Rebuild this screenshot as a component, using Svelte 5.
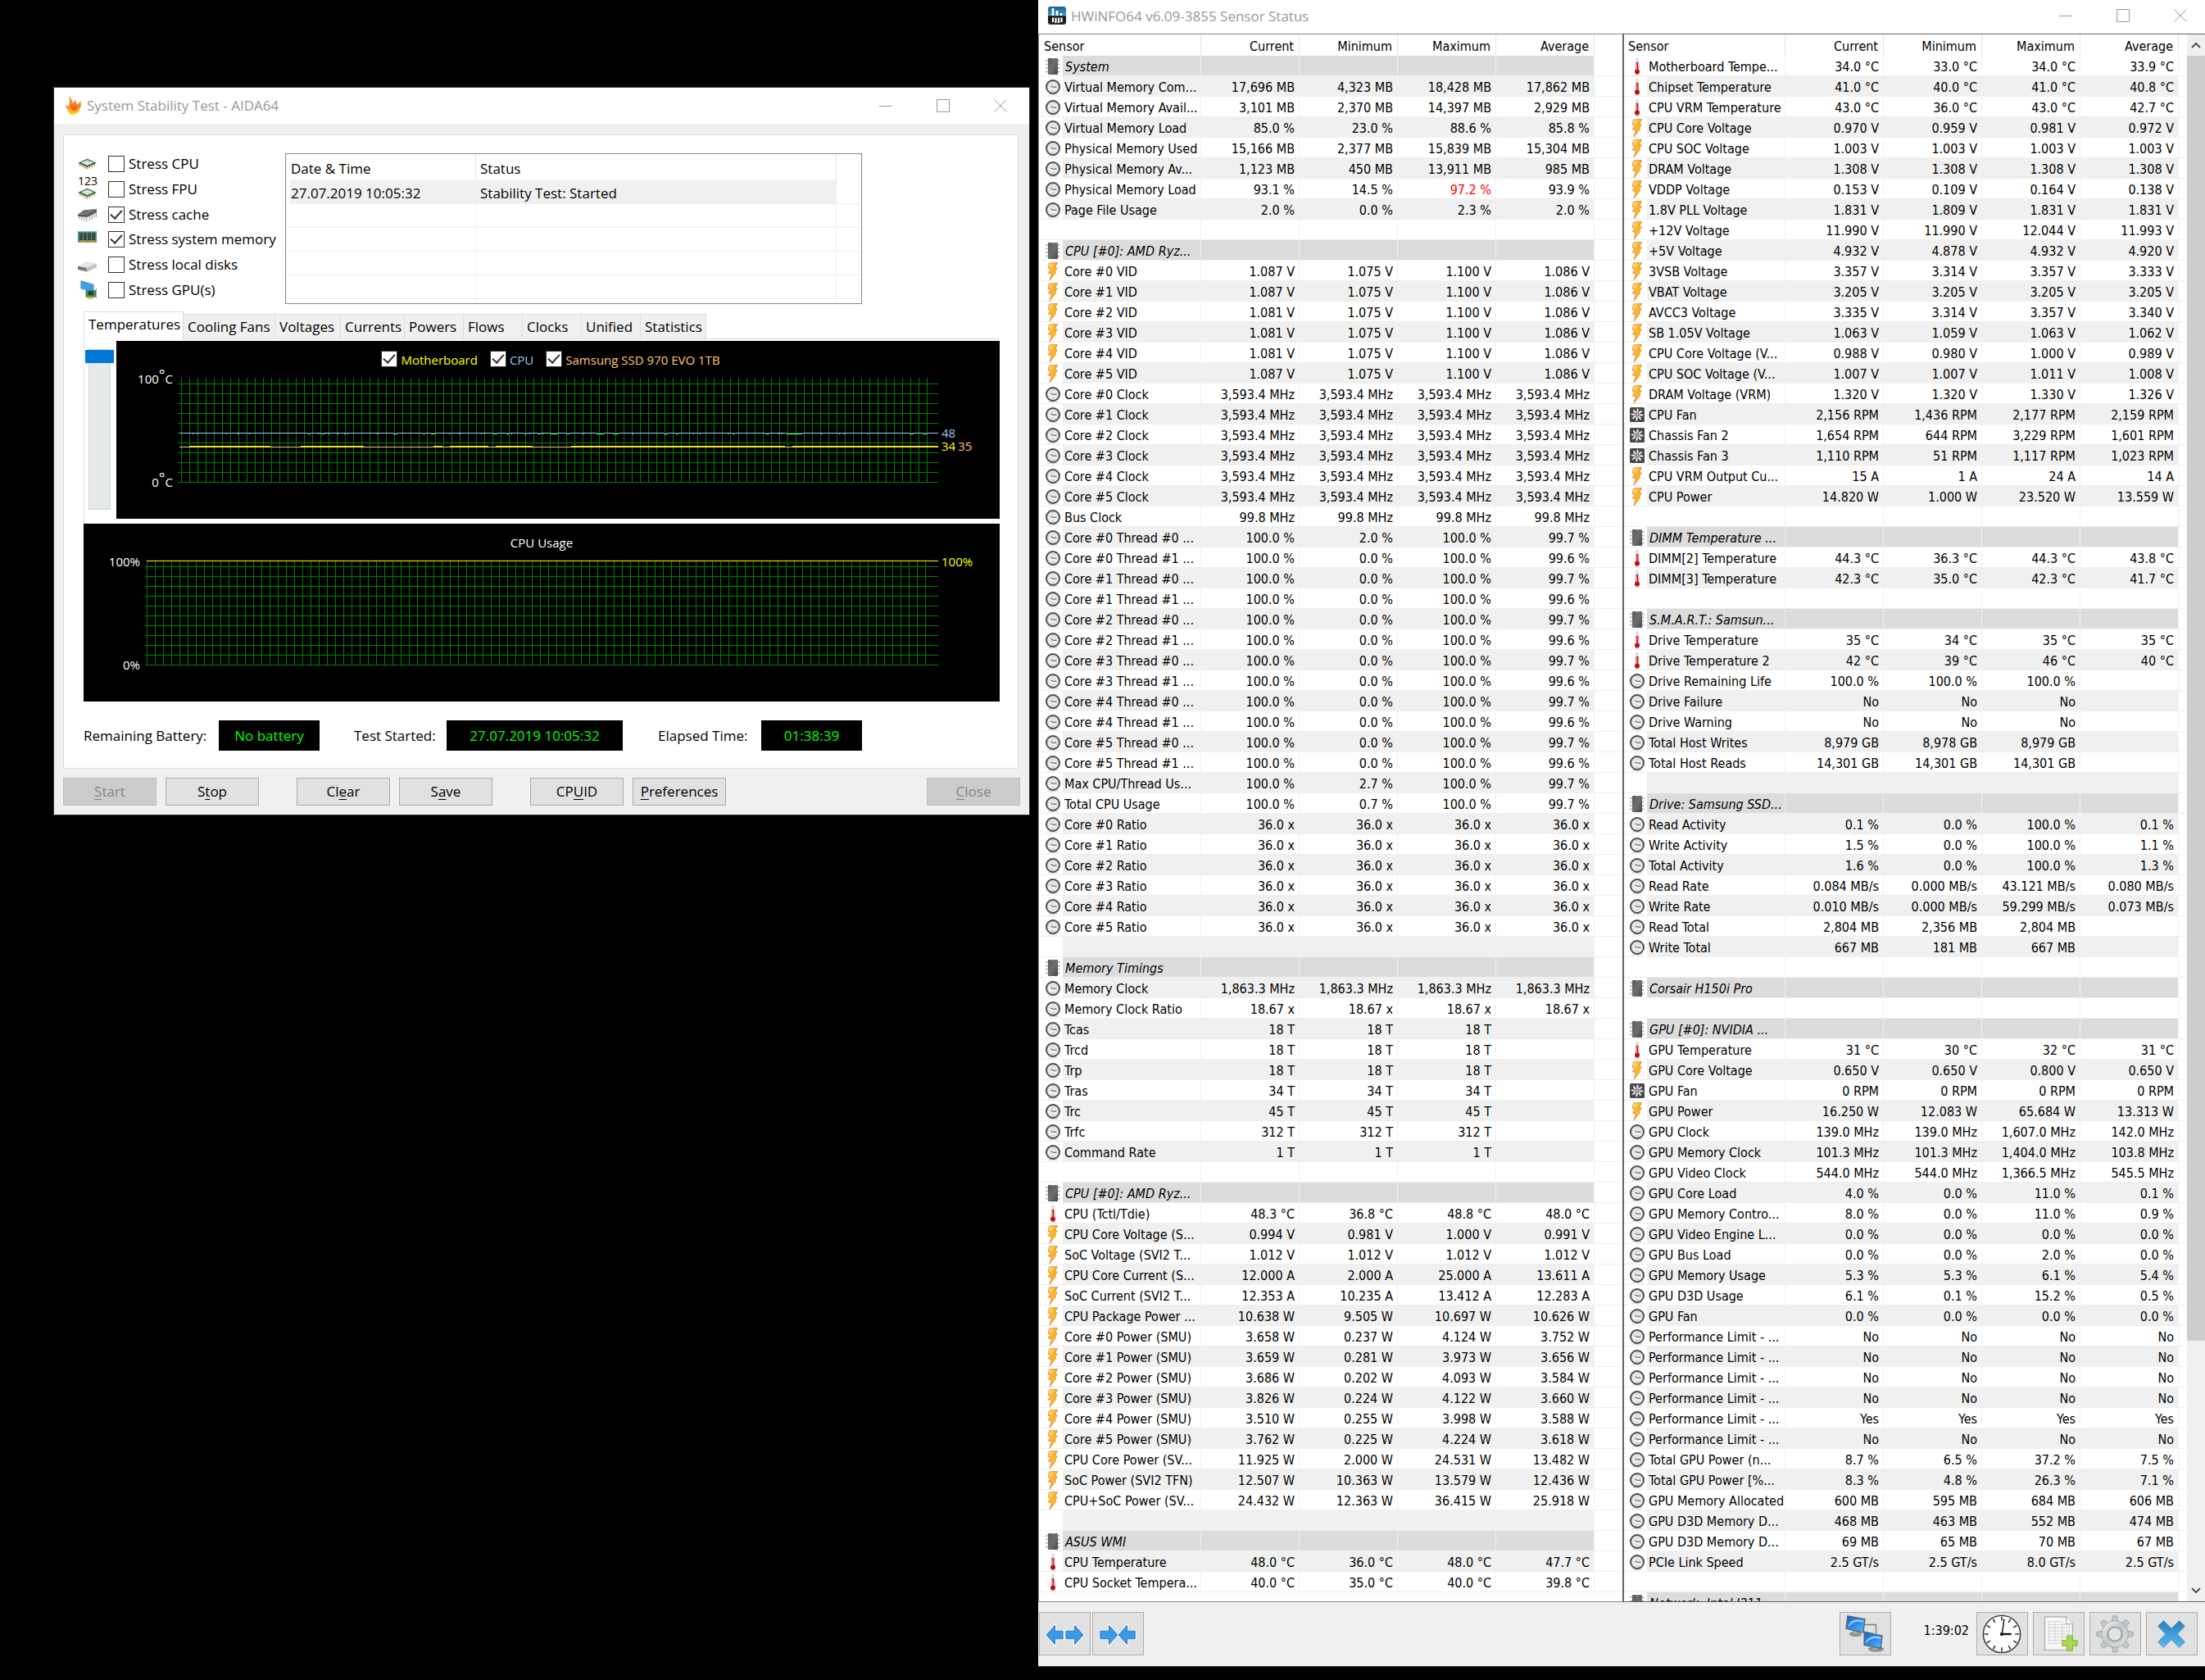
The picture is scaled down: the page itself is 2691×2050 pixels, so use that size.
<script lang="ts">
  type Row = { kind: string; name: string; values: string[] };

  // One line per sensor: kind | name | current | minimum | maximum | average.
  // Kinds: h heading, c gauge, b voltage, t temperature, f fan. An empty line is a spacer row.
  function parse(text: string): Row[] {
    return text.trim().split('\n').map((line) => {
      const [kind = '', name = '', ...values] = line.trim().split('|');
      while (values.length < 4) values.push('');
      return { kind, name, values };
    });
  }

  const threads = [0, 1, 2, 3, 4, 5]
    .flatMap((n) => [0, 1].map((t) => {
      const first = n === 0 && t === 0;
      return `c|Core #${n} Thread #${t} ...|100.0 %|${first ? '2.0' : '0.0'} %|100.0 %|${t ? '99.6' : '99.7'} %`;
    }))
    .join('\n');
  const clocks = [0, 1, 2, 3, 4, 5].map((n) => `c|Core #${n} Clock|3,593.4 MHz|3,593.4 MHz|3,593.4 MHz|3,593.4 MHz`).join('\n');
  const ratios = [0, 1, 2, 3, 4, 5].map((n) => `c|Core #${n} Ratio|36.0 x|36.0 x|36.0 x|36.0 x`).join('\n');

  const left = parse(`h|System
c|Virtual Memory Com...|17,696 MB|4,323 MB|18,428 MB|17,862 MB
c|Virtual Memory Avail...|3,101 MB|2,370 MB|14,397 MB|2,929 MB
c|Virtual Memory Load|85.0 %|23.0 %|88.6 %|85.8 %
c|Physical Memory Used|15,166 MB|2,377 MB|15,839 MB|15,304 MB
c|Physical Memory Av...|1,123 MB|450 MB|13,911 MB|985 MB
c|Physical Memory Load|93.1 %|14.5 %|!97.2 %|93.9 %
c|Page File Usage|2.0 %|0.0 %|2.3 %|2.0 %

h|CPU [#0]: AMD Ryz...
b|Core #0 VID|1.087 V|1.075 V|1.100 V|1.086 V
b|Core #1 VID|1.087 V|1.075 V|1.100 V|1.086 V
b|Core #2 VID|1.081 V|1.075 V|1.100 V|1.086 V
b|Core #3 VID|1.081 V|1.075 V|1.100 V|1.086 V
b|Core #4 VID|1.081 V|1.075 V|1.100 V|1.086 V
b|Core #5 VID|1.087 V|1.075 V|1.100 V|1.086 V
${clocks}
c|Bus Clock|99.8 MHz|99.8 MHz|99.8 MHz|99.8 MHz
${threads}
c|Max CPU/Thread Us...|100.0 %|2.7 %|100.0 %|99.7 %
c|Total CPU Usage|100.0 %|0.7 %|100.0 %|99.7 %
${ratios}

h|Memory Timings
c|Memory Clock|1,863.3 MHz|1,863.3 MHz|1,863.3 MHz|1,863.3 MHz
c|Memory Clock Ratio|18.67 x|18.67 x|18.67 x|18.67 x
c|Tcas|18 T|18 T|18 T
c|Trcd|18 T|18 T|18 T
c|Trp|18 T|18 T|18 T
c|Tras|34 T|34 T|34 T
c|Trc|45 T|45 T|45 T
c|Trfc|312 T|312 T|312 T
c|Command Rate|1 T|1 T|1 T

h|CPU [#0]: AMD Ryz...
t|CPU (Tctl/Tdie)|48.3 °C|36.8 °C|48.8 °C|48.0 °C
b|CPU Core Voltage (S...|0.994 V|0.981 V|1.000 V|0.991 V
b|SoC Voltage (SVI2 T...|1.012 V|1.012 V|1.012 V|1.012 V
b|CPU Core Current (S...|12.000 A|2.000 A|25.000 A|13.611 A
b|SoC Current (SVI2 T...|12.353 A|10.235 A|13.412 A|12.283 A
b|CPU Package Power ...|10.638 W|9.505 W|10.697 W|10.626 W
b|Core #0 Power (SMU)|3.658 W|0.237 W|4.124 W|3.752 W
b|Core #1 Power (SMU)|3.659 W|0.281 W|3.973 W|3.656 W
b|Core #2 Power (SMU)|3.686 W|0.202 W|4.093 W|3.584 W
b|Core #3 Power (SMU)|3.826 W|0.224 W|4.122 W|3.660 W
b|Core #4 Power (SMU)|3.510 W|0.255 W|3.998 W|3.588 W
b|Core #5 Power (SMU)|3.762 W|0.225 W|4.224 W|3.618 W
b|CPU Core Power (SV...|11.925 W|2.000 W|24.531 W|13.482 W
b|SoC Power (SVI2 TFN)|12.507 W|10.363 W|13.579 W|12.436 W
b|CPU+SoC Power (SV...|24.432 W|12.363 W|36.415 W|25.918 W

h|ASUS WMI
t|CPU Temperature|48.0 °C|36.0 °C|48.0 °C|47.7 °C
t|CPU Socket Tempera...|40.0 °C|35.0 °C|40.0 °C|39.8 °C`);

  const right = parse(`t|Motherboard Tempe...|34.0 °C|33.0 °C|34.0 °C|33.9 °C
t|Chipset Temperature|41.0 °C|40.0 °C|41.0 °C|40.8 °C
t|CPU VRM Temperature|43.0 °C|36.0 °C|43.0 °C|42.7 °C
b|CPU Core Voltage|0.970 V|0.959 V|0.981 V|0.972 V
b|CPU SOC Voltage|1.003 V|1.003 V|1.003 V|1.003 V
b|DRAM Voltage|1.308 V|1.308 V|1.308 V|1.308 V
b|VDDP Voltage|0.153 V|0.109 V|0.164 V|0.138 V
b|1.8V PLL Voltage|1.831 V|1.809 V|1.831 V|1.831 V
b|+12V Voltage|11.990 V|11.990 V|12.044 V|11.993 V
b|+5V Voltage|4.932 V|4.878 V|4.932 V|4.920 V
b|3VSB Voltage|3.357 V|3.314 V|3.357 V|3.333 V
b|VBAT Voltage|3.205 V|3.205 V|3.205 V|3.205 V
b|AVCC3 Voltage|3.335 V|3.314 V|3.357 V|3.340 V
b|SB 1.05V Voltage|1.063 V|1.059 V|1.063 V|1.062 V
b|CPU Core Voltage (V...|0.988 V|0.980 V|1.000 V|0.989 V
b|CPU SOC Voltage (V...|1.007 V|1.007 V|1.011 V|1.008 V
b|DRAM Voltage (VRM)|1.320 V|1.320 V|1.330 V|1.326 V
f|CPU Fan|2,156 RPM|1,436 RPM|2,177 RPM|2,159 RPM
f|Chassis Fan 2|1,654 RPM|644 RPM|3,229 RPM|1,601 RPM
f|Chassis Fan 3|1,110 RPM|51 RPM|1,117 RPM|1,023 RPM
b|CPU VRM Output Cu...|15 A|1 A|24 A|14 A
b|CPU Power|14.820 W|1.000 W|23.520 W|13.559 W

h|DIMM Temperature ...
t|DIMM[2] Temperature|44.3 °C|36.3 °C|44.3 °C|43.8 °C
t|DIMM[3] Temperature|42.3 °C|35.0 °C|42.3 °C|41.7 °C

h|S.M.A.R.T.: Samsun...
t|Drive Temperature|35 °C|34 °C|35 °C|35 °C
t|Drive Temperature 2|42 °C|39 °C|46 °C|40 °C
c|Drive Remaining Life|100.0 %|100.0 %|100.0 %
c|Drive Failure|No|No|No
c|Drive Warning|No|No|No
c|Total Host Writes|8,979 GB|8,978 GB|8,979 GB
c|Total Host Reads|14,301 GB|14,301 GB|14,301 GB

h|Drive: Samsung SSD...
c|Read Activity|0.1 %|0.0 %|100.0 %|0.1 %
c|Write Activity|1.5 %|0.0 %|100.0 %|1.1 %
c|Total Activity|1.6 %|0.0 %|100.0 %|1.3 %
c|Read Rate|0.084 MB/s|0.000 MB/s|43.121 MB/s|0.080 MB/s
c|Write Rate|0.010 MB/s|0.000 MB/s|59.299 MB/s|0.073 MB/s
c|Read Total|2,804 MB|2,356 MB|2,804 MB
c|Write Total|667 MB|181 MB|667 MB

h|Corsair H150i Pro

h|GPU [#0]: NVIDIA ...
t|GPU Temperature|31 °C|30 °C|32 °C|31 °C
b|GPU Core Voltage|0.650 V|0.650 V|0.800 V|0.650 V
f|GPU Fan|0 RPM|0 RPM|0 RPM|0 RPM
b|GPU Power|16.250 W|12.083 W|65.684 W|13.313 W
c|GPU Clock|139.0 MHz|139.0 MHz|1,607.0 MHz|142.0 MHz
c|GPU Memory Clock|101.3 MHz|101.3 MHz|1,404.0 MHz|103.8 MHz
c|GPU Video Clock|544.0 MHz|544.0 MHz|1,366.5 MHz|545.5 MHz
c|GPU Core Load|4.0 %|0.0 %|11.0 %|0.1 %
c|GPU Memory Contro...|8.0 %|0.0 %|11.0 %|0.9 %
c|GPU Video Engine L...|0.0 %|0.0 %|0.0 %|0.0 %
c|GPU Bus Load|0.0 %|0.0 %|2.0 %|0.0 %
c|GPU Memory Usage|5.3 %|5.3 %|6.1 %|5.4 %
c|GPU D3D Usage|6.1 %|0.1 %|15.2 %|0.5 %
c|GPU Fan|0.0 %|0.0 %|0.0 %|0.0 %
c|Performance Limit - ...|No|No|No|No
c|Performance Limit - ...|No|No|No|No
c|Performance Limit - ...|No|No|No|No
c|Performance Limit - ...|No|No|No|No
c|Performance Limit - ...|Yes|Yes|Yes|Yes
c|Performance Limit - ...|No|No|No|No
c|Total GPU Power (n...|8.7 %|6.5 %|37.2 %|7.5 %
c|Total GPU Power [%...|8.3 %|4.8 %|26.3 %|7.1 %
c|GPU Memory Allocated|600 MB|595 MB|684 MB|606 MB
c|GPU D3D Memory D...|468 MB|463 MB|552 MB|474 MB
c|GPU D3D Memory D...|69 MB|65 MB|70 MB|67 MB
c|PCIe Link Speed|2.5 GT/s|2.5 GT/s|8.0 GT/s|2.5 GT/s

h|Network: Intel I211 ...`);

  const stress = [
    { id: 'cpu', label: 'Stress CPU', on: false },
    { id: 'fpu', label: 'Stress FPU', on: false },
    { id: 'cache', label: 'Stress cache', on: true },
    { id: 'memory', label: 'Stress system memory', on: true },
    { id: 'disks', label: 'Stress local disks', on: false },
    { id: 'gpu', label: 'Stress GPU(s)', on: false }
  ];
  const tabs = [
    ['Cooling Fans', 'w112'], ['Voltages', 'w80'], ['Currents', 'w78'], ['Powers', 'w72'], ['Flows', 'w72'],
    ['Clocks', 'w72'], ['Unified', 'w72'], ['Statistics', 'w80']
  ];
  const legend = [
    { id: 'mb', label: 'Motherboard' },
    { id: 'proc', label: 'CPU' },
    { id: 'ssd', label: 'Samsung SSD 970 EVO 1TB' }
  ];
  // start and length of the stretches where the SSD reads one degree above the board
  const warm = [[14, 99], [150, 77], [312, 11], [332, 47], [388, 45], [480, 261], [750, 178]];
  // one-degree dips of the CPU line
  const dips = [
    [18, 1], [24, 1], [59, 1], [73, 1], [87, 1], [159, 3], [171, 1], [175, 3], [179, 1], [183, 1], [195, 1], [203, 1], [207, 1],
    [243, 1], [263, 5], [299, 3], [309, 5], [331, 1], [343, 1], [370, 1], [374, 1], [385, 5], [401, 3], [407, 1], [423, 3], [429, 1],
    [439, 4], [445, 1], [455, 8], [474, 4], [495, 1], [511, 9], [531, 7], [555, 1], [593, 5], [608, 3], [629, 1], [637, 1], [671, 1],
    [677, 3], [717, 5], [733, 1], [737, 1], [743, 19], [785, 1], [807, 1], [813, 1], [841, 1], [893, 5], [909, 5]
  ];
  const ticks = [0, 30, 60, 90, 120, 150, 180, 210, 240, 270, 300, 330];
</script>

{#snippet sensorIcon(kind: string)}
  <svg class="sicon" viewBox="0 0 18 22" aria-hidden="true">
    {#if kind === 'h'}
      <path d="M0.5 4h3M0.5 8.5h3M0.5 13h3M0.5 17.5h3M14.5 4h3M14.5 8.5h3M14.5 13h3M14.5 17.5h3" stroke="#a4a4a6" stroke-width="1.8" stroke-dasharray="1.6 0.5" />
      <rect x="3" y="1" width="12" height="20" rx="0.8" fill="url(#chip)" />
      <path d="M7 1a2 1.8 0 0 0 4 0z" fill="#8b8c8f" />
    {:else if kind === 'c'}
      <ellipse cx="9" cy="20" rx="7" ry="1.2" fill="#d9d9d9" />
      <circle cx="9" cy="11" r="8" fill="url(#dial)" stroke="#4a4b4b" stroke-width="2" />
      <path d="M4.5 13.5l.5-.3M13.5 13.5l-.5-.3M9 5v.8M6.5 16h5" stroke="#b9bbbd" stroke-width="1" />
      <path d="M6.5 10L9.5 11.5L13.5 11.2" fill="none" stroke="#5b5b5e" stroke-width="1.1" />
      <path d="M9 11.4L11.5 10.4" stroke="#e0874a" stroke-width="1.1" />
    {:else if kind === 'b'}
      <path d="M4.5 1L14.5 0.4L11.5 6.6L14.2 6.9L11.2 12L12.8 12.3L5 22L7.3 13.5L3.4 13L6.2 7.6L3.2 7.5z" fill="url(#bolt)" stroke="#dd8a3c" stroke-width="0.9" />
    {:else if kind === 't'}
      <ellipse cx="9" cy="21" rx="3" ry="0.9" fill="#d8d8d8" />
      <rect x="7.2" y="0.5" width="3.6" height="16" rx="1.8" fill="#dedede" />
      <rect x="7.6" y="6" width="2.8" height="11" fill="#d4181f" />
      <circle cx="9" cy="17.5" r="3" fill="#c30d14" />
      <rect x="8" y="7" width="1" height="8" fill="#f0797c" />
    {:else if kind === 'f'}
      <rect x="0" y="2" width="18" height="18" rx="1.5" fill="#47494a" />
      {#each [0, 45, 90, 135, 180, 225, 270, 315] as a}
        <path d="M9 9.5C7.8 7 8 4.5 10 3C11 5 10.6 8 9.6 10z" fill="#eeeaeb" transform="rotate({a} 9 11)" />
      {/each}
      <circle cx="9" cy="11" r="2.2" fill="#b9a3a8" stroke="#5a5557" stroke-width="0.6" />
    {/if}
  </svg>
{/snippet}

{#snippet sensorTable(rows: Row[])}
  <table class="sensors">
    <colgroup><col class="c-icon" /><col class="c-name" /><col class="c-val" /><col class="c-val" /><col class="c-val" /><col class="c-val" /><col /></colgroup>
    <thead>
      <tr><th class="first" colspan="2">Sensor</th><th>Current</th><th>Minimum</th><th>Maximum</th><th>Average</th><th class="rest"></th></tr>
    </thead>
    <tbody>
      {#each rows as row, i}
        <tr class:odd={i % 2 === 1} class:head={row.kind === 'h'}>
          <td class="icon">{#if row.kind}{@render sensorIcon(row.kind)}{/if}</td>
          <td class="name">{row.name}</td>
          {#each row.values as v}
            <td class:alert={v.startsWith('!')}>{v.replace('!', '')}</td>
          {/each}
          <td class="rest"></td>
        </tr>
      {/each}
    </tbody>
  </table>
{/snippet}

{#snippet controls()}
  <div class="controls">
    <button aria-label="Minimize"><svg viewBox="0 0 16 16"><path d="M0 8.5h16" /></svg></button>
    <button aria-label="Maximize"><svg viewBox="0 0 16 16"><path d="M.5.5h15v15h-15z" /></svg></button>
    <button aria-label="Close window"><svg viewBox="0 0 16 16"><path d="M.5.5l15 15M15.5.5l-15 15" /></svg></button>
  </div>
{/snippet}

{#snippet stressIcon(id: string)}
  <svg class="sticon" viewBox="0 0 24 24" aria-hidden="true">
    {#if id === 'cpu' || id === 'fpu'}
      <path d="M3 12v3M6 13.5v3M9 15v3M12 16v3M15 15v3M18 13.5v3M21 12v3" stroke="#c79a3d" stroke-width="1.4" />
      <path d="M0 11L12 5.5L24 11L12 16.5z" fill="#3f6b50" />
      <path d="M4 10.5L12 7L20 10.5L12 14z" fill="#dfe3df" />
    {:else if id === 'cache'}
      <path d="M2 13v5M5 14v5M8 14.5v5M11 15v6M15 13v6M18 12v6M21 11v5M23.5 10v5" stroke="#a8a8ab" stroke-width="1.3" />
      <path d="M0 12L8 6L24 5V9L12 15L0 14z" fill="#5b5c5f" />
      <path d="M0 12L8 6L24 5L12 12z" fill="#77787b" />
    {:else if id === 'memory'}
      <rect x="0" y="2" width="24" height="14" fill="#3f9a6b" />
      <path d="M2 4h4v9H2zM7.3 4h4v9h-4zM12.7 4h4v9h-4zM18 4h4v9h-4z" fill="#3d4347" />
      <path d="M2 13.5h9v2.5H2zM13 13.5h9v2.5h-9z" fill="#c98a4b" />
    {:else if id === 'disks'}
      <path d="M0 14L12 8L24 11V15L12 21L0 18z" fill="#bfc1c3" />
      <path d="M0 14L12 8L24 11L11 16z" fill="#e6e7e8" />
      <path d="M0 14L11 16V20.500L0 18z" fill="#6e7173" />
      <path d="M6 17.5h3" stroke="#4fc24f" stroke-width="1.5" />
    {:else}
      <path d="M4 0L20 5V14L4 10z" fill="#39a0ee" stroke="#7795a8" stroke-width="1" />
      <rect x="10" y="12" width="13" height="9" fill="#3a8c5c" />
      <rect x="13.5" y="13.5" width="6" height="5" fill="#2d3b35" />
      <path d="M23.5 10v12" stroke="#9aa0a3" stroke-width="1" />
      <path d="M12 22h8" stroke="#e5a02c" stroke-width="2.5" stroke-dasharray="2 .6" />
    {/if}
  </svg>
{/snippet}

<svg class="defs" aria-hidden="true">
  <defs>
    <linearGradient id="chip" x1="0" y1="0" x2="1" y2="1"><stop offset="0" stop-color="#58595c" /><stop offset=".5" stop-color="#6d6e71" /><stop offset="1" stop-color="#48494b" /></linearGradient>
    <linearGradient id="dial" x1="0" y1="0" x2="0" y2="1"><stop offset="0" stop-color="#dcdfe0" /><stop offset="1" stop-color="#f6f6f6" /></linearGradient>
    <linearGradient id="bolt" x1="0" y1="0" x2="1" y2="1"><stop offset="0" stop-color="#fff3a0" /><stop offset=".45" stop-color="#fbb11f" /><stop offset="1" stop-color="#fbe04a" /></linearGradient>
    <linearGradient id="screen" x1="0" y1="0" x2="1" y2="1"><stop offset="0" stop-color="#1c5fc0" /><stop offset=".5" stop-color="#2f8be8" /><stop offset="1" stop-color="#5fb4f6" /></linearGradient>
    <linearGradient id="steel" x1="0" y1="0" x2="1" y2="1"><stop offset="0" stop-color="#f2f4f4" /><stop offset=".5" stop-color="#c3c7c9" /><stop offset="1" stop-color="#e3e6e6" /></linearGradient>
    <linearGradient id="cross" x1="0" y1="0" x2="0" y2="1"><stop offset="0" stop-color="#2a7fbe" /><stop offset="1" stop-color="#5cb9ef" /></linearGradient>
    <linearGradient id="fire" x1="0" y1="0" x2="0" y2="1"><stop offset="0" stop-color="#f9a03c" /><stop offset=".55" stop-color="#f58220" /><stop offset="1" stop-color="#ffe11c" /></linearGradient>
    <linearGradient id="logo" x1="0" y1="0" x2="0" y2="1"><stop offset="0" stop-color="#1d5f8f" /><stop offset=".5" stop-color="#3d9ccf" /><stop offset=".54" stop-color="#0c0f12" /><stop offset="1" stop-color="#24282c" /></linearGradient>
  </defs>
</svg>

<main class="desktop">
  <div class="left-half">
    <section class="aida">
      <header class="titlebar">
        <svg class="app" viewBox="0 0 20 24" aria-hidden="true">
          <path d="M4 0C8 5 9 7 9 9C11 7 11 5 12 4C12 7 14 9 14 11C16 9 17 8 19 6C18 10 20 13 17 16C17 20 13 23 9 23C5 23 3 20 3 17C1 15 0 13 0 11C2 13 3 12 4 13C5 9 5 5 4 0z" fill="url(#fire)" />
          <path d="M7 9C8 12 9 13 10 14C12 13 12 11 12 9C14 12 15 15 12 19C9 18 5 17 7 9z" fill="#f4651c" />
        </svg>
        <h1>System Stability Test - AIDA64</h1>
        {@render controls()}
      </header>

      <div class="panel">
        <div class="top">
          <div class="stress">
            {#each stress as s}
              <div class="opt">
                <span class="glyph {s.id}">
                  {#if s.id === 'fpu'}<b>123</b>{/if}
                  {@render stressIcon(s.id)}
                </span>
                <input type="checkbox" id={s.id} checked={s.on} />
                <label for={s.id}>{s.label}</label>
              </div>
            {/each}
          </div>
          <div class="logbox">
            <table class="log">
              <colgroup><col class="when" /><col /><col class="end" /></colgroup>
              <thead><tr><th>Date &amp; Time</th><th>Status</th><th></th></tr></thead>
              <tbody>
                <tr class="filled"><td>27.07.2019 10:05:32</td><td>Stability Test: Started</td><td></td></tr>
                {#each [1, 2, 3, 4, 5] as _}<tr><td></td><td></td><td></td></tr>{/each}
              </tbody>
            </table>
          </div>
        </div>

        <nav class="tabs">
          <button class="tab active">Temperatures</button>
          {#each tabs as [label, w]}<button class="tab {w}">{label}</button>{/each}
        </nav>

        <div class="temps">
          <input class="scale" type="range" min="0" max="10" value="0" aria-label="Graph scale" />
          <div class="chart">
            <div class="legend">
              {#each legend as l}
                <span class="key {l.id}"><input type="checkbox" id={l.id} checked /><label for={l.id}>{l.label}</label></span>
              {/each}
            </div>
            <div class="plotrow">
              <div class="ylab"><span>100<i>°</i>C</span><span>0<i>°</i>C</span></div>
              <svg class="plot" shape-rendering="crispEdges">
                <defs>
                  <pattern id="gv" x="4" y="0" width="10" height="400" patternUnits="userSpaceOnUse"><rect width="1" height="400" fill="#008000" /></pattern>
                  <pattern id="gh" x="0" y="7" width="2000" height="12" patternUnits="userSpaceOnUse"><rect width="2000" height="1" fill="#008000" /></pattern>
                </defs>
                <rect x="4" width="99%" height="128" fill="url(#gv)" />
                <rect width="100%" y="7" height="121" fill="url(#gh)" />
                <rect x="2" y="67" width="100%" height="1" fill="#9cc3ee" />
                {#each dips as [x, w]}
                  {#if w > 2}<rect {x} y="67" width={w} height="1" fill="#008000" />{/if}
                  <rect {x} y="68" width={w} height="1" fill="#8fe8cf" />
                {/each}
                <rect x="2" y="84" width="100%" height="1" fill="#ffc77a" />
                {#each warm as [x, w]}
                  <rect {x} y="83" width={w} height="1" fill="#ffb84d" />
                  <rect {x} y="84" width={w} height="1" fill="#ffff00" />
                {/each}
              </svg>
              <div class="now"><span class="proc">48</span><span class="pair"><span class="mb">34</span><span class="ssd">35</span></span></div>
            </div>
          </div>
        </div>

        <div class="chart usage">
          <h2>CPU Usage</h2>
          <div class="plotrow">
            <div class="ylab"><span>100%</span><span>0%</span></div>
            <svg class="plot" shape-rendering="crispEdges">
              <defs>
                <pattern id="uv" x="2" y="0" width="10" height="400" patternUnits="userSpaceOnUse"><rect width="1" height="400" fill="#008000" /></pattern>
              </defs>
              <rect x="2" width="99%" height="128" fill="url(#uv)" />
              <rect width="100%" y="7" height="121" fill="url(#gh)" />
              <rect x="2" y="0" width="100%" height="1" fill="#ffff00" />
            </svg>
            <div class="now full">100%</div>
          </div>
        </div>

        <div class="status">
          <span>Remaining Battery:</span><output>No battery</output>
          <span>Test Started:</span><output class="wide">27.07.2019 10:05:32</output>
          <span>Elapsed Time:</span><output>01:38:39</output>
        </div>
      </div>

      <footer class="buttons">
        <button disabled><u>S</u>tart</button>
        <button>S<u>t</u>op</button>
        <button class="group">Cl<u>e</u>ar</button>
        <button>S<u>a</u>ve</button>
        <button class="group">CP<u>U</u>ID</button>
        <button><u>P</u>references</button>
        <button class="last" disabled><u>C</u>lose</button>
      </footer>
    </section>
  </div>

  <section class="hw">
    <header class="titlebar">
      <svg class="app" viewBox="0 0 22 22" aria-hidden="true">
        <rect width="22" height="22" rx="3" fill="url(#logo)" />
        <path d="M6 2v9M11 5v6M16 8v3" stroke="#fff" stroke-width="2.6" />
        <path d="M6 13.500v5.500M9.500 13.500v6.500M13 13.500v6.500M16.500 13.500v5.500" stroke="#fff" stroke-width="2.2" />
      </svg>
      <h1>HWiNFO64 v6.09-3855 Sensor Status</h1>
      {@render controls()}
    </header>
    <div class="lists">
      <div class="pane">{@render sensorTable(left)}</div>
      <div class="pane second">
        <div class="clip">{@render sensorTable(right)}</div>
        <div class="scroll">
          <button aria-label="Scroll up"><svg viewBox="0 0 12 10"><path d="M1 8L6 3L11 8" /></svg></button>
          <span class="thumb"></span>
          <button class="down" aria-label="Scroll down"><svg viewBox="0 0 12 10"><path d="M1 2L6 7L11 2" /></svg></button>
        </div>
      </div>
    </div>
    <footer class="toolbar">
      <button aria-label="Widen columns">
        <svg viewBox="0 0 63 53">
          <g fill="#3a9ae8" stroke="#fff" stroke-width="3"><path d="M8 28L19 16V23H29V33H19V40z" /><path d="M55 28L44 16V23H33V33H44V40z" /></g>
          <g fill="#3a9ae8" stroke="#2470b4" stroke-width="1"><path d="M8 28L19 16V23H29V33H19V40z" /><path d="M55 28L44 16V23H33V33H44V40z" /></g>
        </svg>
      </button>
      <button aria-label="Narrow columns">
        <svg viewBox="0 0 63 53">
          <g fill="#3a9ae8" stroke="#fff" stroke-width="3"><path d="M31 28L20 16V23H9V33H20V40z" /><path d="M32 28L43 16V23H53V33H43V40z" /></g>
          <g fill="#3a9ae8" stroke="#2470b4" stroke-width="1"><path d="M31 28L20 16V23H9V33H20V40z" /><path d="M32 28L43 16V23H53V33H43V40z" /></g>
        </svg>
      </button>
      <button class="net" aria-label="Remote sensors">
        <svg viewBox="0 0 63 53">
          <path d="M31 15H45V26" fill="none" stroke="#7c7f82" stroke-width="1.5" />
          <ellipse cx="19" cy="27" rx="8" ry="3.5" fill="#8d9194" /><path d="M16 21h5v6h-5z" fill="#a9acae" />
          <path d="M9 4L31 8L29 25L7 20z" fill="url(#screen)" stroke="#55606b" stroke-width="1.2" />
          <path d="M10 16C14 8 22 8 29 10V12C22 10 15 11 10 18z" fill="#9ccdf8" />
          <ellipse cx="45" cy="46" rx="10" ry="3.5" fill="#8d9194" /><path d="M41 41h5v6h-5z" fill="#a9acae" />
          <path d="M30 24L53 29L51 45L30 41z" fill="url(#screen)" stroke="#55606b" stroke-width="1.2" />
          <path d="M32 37C36 29 44 29 51 31V33C44 31 37 32 32 39z" fill="#9ccdf8" />
        </svg>
      </button>
      <time>1:39:02</time>
      <button aria-label="Reset clock">
        <svg viewBox="0 0 63 53">
          <circle cx="31" cy="27" r="23.5" fill="#fff" stroke="#333" stroke-width="1.5" />
          {#each ticks as a}<path d="M31 5v5" stroke="#222" stroke-width="1.5" transform="rotate({a} 31 27)" />{/each}
          <path d="M31 29L34 8" stroke="#111" stroke-width="1.5" /><path d="M29 27H43" stroke="#111" stroke-width="2.5" /><circle cx="31" cy="27" r="2" fill="#111" />
        </svg>
      </button>
      <button aria-label="Start logging">
        <svg viewBox="0 0 63 53">
          <path d="M12 48h36v-2h-36z" fill="#c9c9c9" />
          <path d="M14 5H41L49 14V47H14z" fill="#f7f7f7" stroke="#a9a9a9" stroke-width="1.2" />
          <path d="M41 5V14H49" fill="#fff" stroke="#a8a8a8" stroke-width="1.2" />
          <path d="M19 11h17M19 15h26M19 19h26M19 23h26M19 27h26M19 31h26M19 35h18M19 39h18M19 11v28M27 11v28M36 11v24M45 15v16" stroke="#d0d0d0" stroke-width="1" fill="none" />
          <path d="M42 29h7v6h6v7h-6v6h-7v-6h-6v-7h6z" fill="#a9d94f" stroke="#7dad2c" stroke-width="1" />
        </svg>
      </button>
      <button aria-label="Settings">
        <svg viewBox="0 0 63 53">
          {#each [0, 45, 90, 135, 180, 225, 270, 315] as a}<path d="M27 12L28.5 4H33.5L35 12z" fill="#c6cacc" stroke="#8d9294" stroke-width=".8" transform="rotate({a} 31 27)" />{/each}
          <circle cx="31" cy="27" r="17" fill="url(#steel)" stroke="#979c9e" stroke-width=".8" />
          <circle cx="31" cy="27" r="10.5" fill="#b1b6b8" />
          <circle cx="31" cy="27" r="8.5" fill="#e4e4e4" stroke="#858a8c" stroke-width="1" />
        </svg>
      </button>
      <button aria-label="Close sensors">
        <svg viewBox="0 0 63 53">
          <path d="M21 10L31 20L41 10L48 17L38.5 27L48 37L41 44L31 34L21 44L14 37L23.5 27L14 17z" fill="url(#cross)" stroke="#3787bd" stroke-width=".8" />
        </svg>
      </button>
    </footer>
  </section>
</main>

<style>
  :global(body) { background: #000; }
  * { box-sizing: border-box; }
  .defs { position: absolute; width: 0; height: 0; }
  button { font: inherit; color: inherit; padding: 0; margin: 0; border: 0; background: none; border-radius: 0; }
  h1, h2 { margin: 0; font-weight: 400; }
  .desktop {
    display: grid; grid-template-columns: 1267fr 1424fr; align-items: start;
    min-height: 100vh; background: #000; color: #000;
    font-family: "Open Sans", "Noto Sans", sans-serif; font-size: 17px; line-height: 24px;
  }
  .left-half { padding: 106px 10px 0 65px; min-width: 0; }

  .titlebar { display: flex; align-items: center; background: #fff; color: #999; }
  .titlebar h1 { font-size: 17px; flex: 1; white-space: nowrap; }
  .controls { display: flex; }
  .controls button { width: 70px; height: 40px; display: grid; place-items: center; }
  .controls svg { width: 16px; height: 16px; }
  .controls path { fill: none; stroke: #999; stroke-width: 1; }

  .aida { background: #f0f0f0; border: 1px solid #333; }
  .aida .titlebar { height: 44px; padding-left: 14px; }
  .aida .app { width: 20px; height: 24px; margin-right: 6px; }
  .panel { margin: 13px 13px 0 11px; border: 1px solid #dcdcdc; background: #fff; padding: 22px 22px 21px 24px; }
  .top { display: flex; height: 184px; }
  .stress { display: flex; flex-direction: column; justify-content: space-between; height: 174px; margin: 3px 0 0 -7px; width: 253px; }
  .opt { display: flex; align-items: center; height: 20px; white-space: nowrap; }
  .glyph { width: 37px; height: 24px; }
  .glyph.fpu { height: 32px; }
  .glyph b { display: block; font: 14px/12px "Open Sans", sans-serif; width: 23px; text-align: center; margin-bottom: -3px; }
  .sticon { width: 23px; height: 24px; display: block; }
  input[type="checkbox"] {
    appearance: none; margin: 0; width: 20px; height: 20px; flex: none; background: #fff; border: 1px solid #333; display: grid; place-items: center;
  }
  input[type="checkbox"]:checked::after {
    content: ""; width: 6px; height: 12px; border: solid #333; border-width: 0 2px 2px 0; transform: translate(0, -2px) rotate(42deg);
  }
  .opt label { padding-left: 5px; }

  .logbox { flex: none; width: 704px; border: 1px solid #828790; padding: 0 1px; overflow: hidden; }
  .log { width: 100%; border-collapse: separate; border-spacing: 0; table-layout: fixed; }
  .log .when { width: 231px; }
  .log .end { width: 29px; }
  .log th { height: 32px; text-align: left; font-weight: 400; padding: 4px 0 0 5px; border-right: 1px solid #e5e5e5; }
  .log td { height: 29px; padding: 3px 0 0 5px; line-height: 24px; border-right: 1px solid #f0f0f0; border-bottom: 1px solid #f0f0f0; }
  .log th:last-child, .log td:last-child { border-right: 0; }
  .log .filled td { background: #f0f0f0; }
  .log .filled td:first-child { box-shadow: inset 4px 0 #fff; }
  .log .filled td:last-child { background: #fff; }

  .tabs { display: flex; align-items: flex-end; margin-top: 9px; border-bottom: 1px solid #dcdcdc; white-space: nowrap; }
  .tab { height: 30px; border: 1px solid #dcdcdc; border-width: 1px 1px 0 0; background: #f0f0f0; text-align: left; padding-left: 5px; }
  .tab.active { height: 34px; width: 122px; background: #fff; border-left-width: 1px; margin-bottom: -1px; padding-bottom: 4px; }
  .w112 { width: 112px; }
  .w80 { width: 80px; }
  .w78 { width: 78px; }
  .w72 { width: 72px; }

  .temps { display: flex; padding: 2px 0 6px; border-left: 1px solid #dcdcdc; }
  .temps .chart { flex: 1; min-width: 0; }
  .scale { appearance: none; writing-mode: vertical-lr; width: 35px; height: 196px; margin: 10px 3px 0 1px; background: none; flex: none; }
  .scale::-webkit-slider-runnable-track { width: 27px; height: 196px; background: #e6eaea; border: 1px solid #d6d6d6; }
  .scale::-webkit-slider-thumb { appearance: none; width: 35px; height: 16px; margin-left: -5px; margin-right: -5px; background: #0078d7; border: 0; }

  .chart { height: 217px; background: #000; color: #fff; font-size: 15px; line-height: 20px; }
  .legend { display: flex; justify-content: center; gap: 15px; padding: 12px 18px 0 0; height: 45px; }
  .key { display: flex; gap: 4px; height: 22px; }
  .key label { padding-top: 1px; }
  .mb { color: #ff0; }
  .proc { color: #9cc3ee; }
  .ssd { color: #ffc77a; }
  .plotrow { display: grid; grid-template-columns: 75px 1fr 75px; height: 128px; }
  .ylab { display: flex; flex-direction: column; justify-content: space-between; text-align: right; padding-right: 6px; margin: -9px 0; }
  .ylab i { font-style: normal; font-size: 18px; line-height: 1px; vertical-align: 4px; }
  .plot { width: 100%; height: 128px; display: block; }
  .now { padding: 59px 0 0 4px; display: flex; flex-direction: column; line-height: 16px; }
  .pair { display: flex; gap: 3px; }
  .usage { padding-top: 12px; }
  .usage h2 { font-size: 15px; text-align: center; height: 33px; line-height: 22px; }
  .usage .now { padding-top: 0; margin-top: -7px; color: #ff0; }

  .status { display: grid; grid-template-columns: 165px 165px 113px 258px 126px 123px; align-items: center; padding-top: 23px; white-space: nowrap; }
  .status output { width: 123px; height: 37px; line-height: 38px; background: #000; color: #0f0; text-align: center; }
  .status .wide { width: 215px; }

  .buttons { display: flex; gap: 11px; padding: 11px; }
  .buttons button { width: 114px; height: 34px; background: #e1e1e1; border: 1px solid #adadad; }
  .buttons button:disabled { background: #ccc; border-color: #bfbfbf; color: #838383; }
  .buttons .group { margin-left: 35px; }
  .buttons .last { margin-left: auto; }
  u { text-underline-offset: 3px; }

  .hw { background: #f0f0f0; overflow: hidden; min-width: 0; border-bottom: 1px solid #333; }
  .hw .titlebar { height: 41px; padding-left: 12px; margin-right: -5px; }
  .hw .app { width: 22px; height: 22px; margin: 0 6px 4px 0; }
  .hw .titlebar h1 { padding-bottom: 2px; }
  .hw .controls { padding-bottom: 4px; }
  .lists, .toolbar { font-family: "DejaVu Sans Condensed", "DejaVu Sans", sans-serif; font-size: 16px; line-height: 20px; }
  .lists { display: grid; grid-template-columns: 713fr 711fr; }
  .pane { background: #fff; border: 1px solid #828790; border-right: 0; padding: 0 1px 11px; min-width: 0; }
  .second { border-color: #646464; border-left-width: 2px; padding: 0; display: grid; grid-template-columns: 1fr 22px; contain: size; overflow: hidden; }
  .clip { overflow: hidden; min-height: 0; padding-right: 1px; }
  .sensors { width: 100%; border-collapse: separate; border-spacing: 0; table-layout: fixed; white-space: nowrap; }
  .c-icon { width: 28px; }
  .c-name { width: 169px; }
  .c-val { width: 120px; }
  .sensors th { height: 26px; font-weight: 400; text-align: right; padding: 3px 6px 0 0; border-right: 1px solid #e5e5e5; }
  .sensors .first { text-align: left; padding-left: 5px; }
  .sensors td { height: 25px; padding: 4px 5px 0 0; text-align: right; border: solid #f0f0f0; border-width: 0 1px 1px 0; overflow: hidden; }
  .sensors .name { text-align: left; padding: 4px 0 0 2px; }
  .sensors .icon { padding: 1px 0 0 7px; border-right: 0; line-height: 0; }
  .sensors .rest { border-right: 0; }
  .odd td { background: #f0f0f0; }
  .head td { background: #dcdcdc; }
  .head .name { font-style: italic; padding-left: 3px; }
  .sensors tbody .icon, .sensors tbody .rest { background: #fff; }
  .alert { color: #f00; }
  .sicon { width: 18px; height: 22px; display: block; }

  .scroll { display: flex; flex-direction: column; background: #f0f0f0; min-height: 0; }
  .scroll button { height: 26px; display: grid; place-items: center; }
  .scroll svg { width: 12px; height: 10px; }
  .scroll path { fill: none; stroke: #505050; stroke-width: 2; }
  .thumb { height: 82%; background: #cdcdcd; }
  .down { margin-top: auto; }

  .toolbar { display: flex; align-items: center; height: 78px; gap: 2px; padding: 0 9px 2px 1px; }
  .toolbar button { width: 63px; height: 53px; background: #e1e1e1; border: 1px solid #adadad; flex: none; }
  .toolbar svg { width: 61px; height: 51px; display: block; }
  .toolbar .net { margin-left: auto; }
  .toolbar time { width: 100px; text-align: right; padding: 0 7px 6px 0; }
  .toolbar time ~ button + button { margin-left: 4px; }
</style>
